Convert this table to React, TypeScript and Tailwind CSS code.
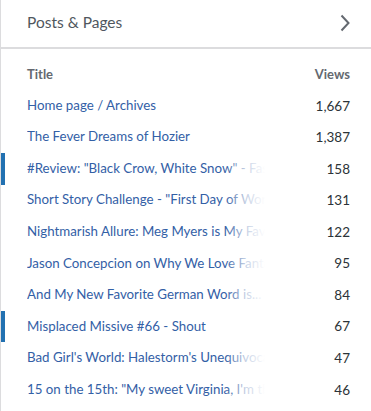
import React from "react";

const rows: { title: string; views: string; mark?: boolean }[] = [
  { title: "Home page / Archives", views: "1,667" },
  { title: "The Fever Dreams of Hozier", views: "1,387" },
  { title: "#Review: \"Black Crow, White Snow\" - Fast and Furious", views: "158", mark: true },
  { title: "Short Story Challenge - \"First Day of Work\"", views: "131" },
  { title: "Nightmarish Allure: Meg Myers is My Favorite", views: "122" },
  { title: "Jason Concepcion on Why We Love Fantasy", views: "95" },
  { title: "And My New Favorite German Word is...", views: "84" },
  { title: "Misplaced Missive #66 - Shout", views: "67", mark: true },
  { title: "Bad Girl's World: Halestorm's Unequivocal", views: "47" },
  { title: "15 on the 15th: \"My sweet Virginia, I'm the one", views: "46" },
];

export default function App() {
  return (
    <div
      className="w-[371px] h-[411px] bg-white border-l border-[#dcdcde] overflow-hidden"
      style={{ fontFamily: '"Segoe UI", Lato, "Noto Sans", sans-serif' }}
    >
      <div className="h-[47px] flex items-center justify-between pl-[26px] pr-[21px] pb-[2px]">
        <span className="text-[15.5px] text-[#50575e]">Posts &amp; Pages</span>
        <svg width="10" height="18" viewBox="0 0 10 18" fill="none">
          <path d="M1.5 1.5 L8.5 9 L1.5 16.5" stroke="#646970" strokeWidth="2" />
        </svg>
      </div>
      <div className="h-[2px] bg-[#dcdcde]" />
      <div className="h-[39px] flex items-end justify-between pl-[26px] pr-[21px] pb-[4px] text-[13px] font-bold text-[#646970]">
        <span>Title</span>
        <span>Views</span>
      </div>
      <div className="pt-[2px]">
        {rows.map((r, i) => (
          <div key={i} className="relative h-[31.55px] flex items-center justify-between pl-[26px] pr-[21px]">
            {r.mark && <div className="absolute left-0 top-0 bottom-0 w-[4px] bg-[#2271b1]" />}
            <div className="relative w-[238px] overflow-hidden whitespace-nowrap text-clip text-[13.3px] text-[#3360a6]">
              <span className="block w-[238px] overflow-hidden">{r.title}</span>
              <div className="absolute right-0 top-0 bottom-0 w-[40px] bg-gradient-to-r from-white/0 via-white/70 to-white" />
            </div>
            <span className="text-[13.5px] text-[#2c3338]">{r.views}</span>
          </div>
        ))}
      </div>
    </div>
  );
}
